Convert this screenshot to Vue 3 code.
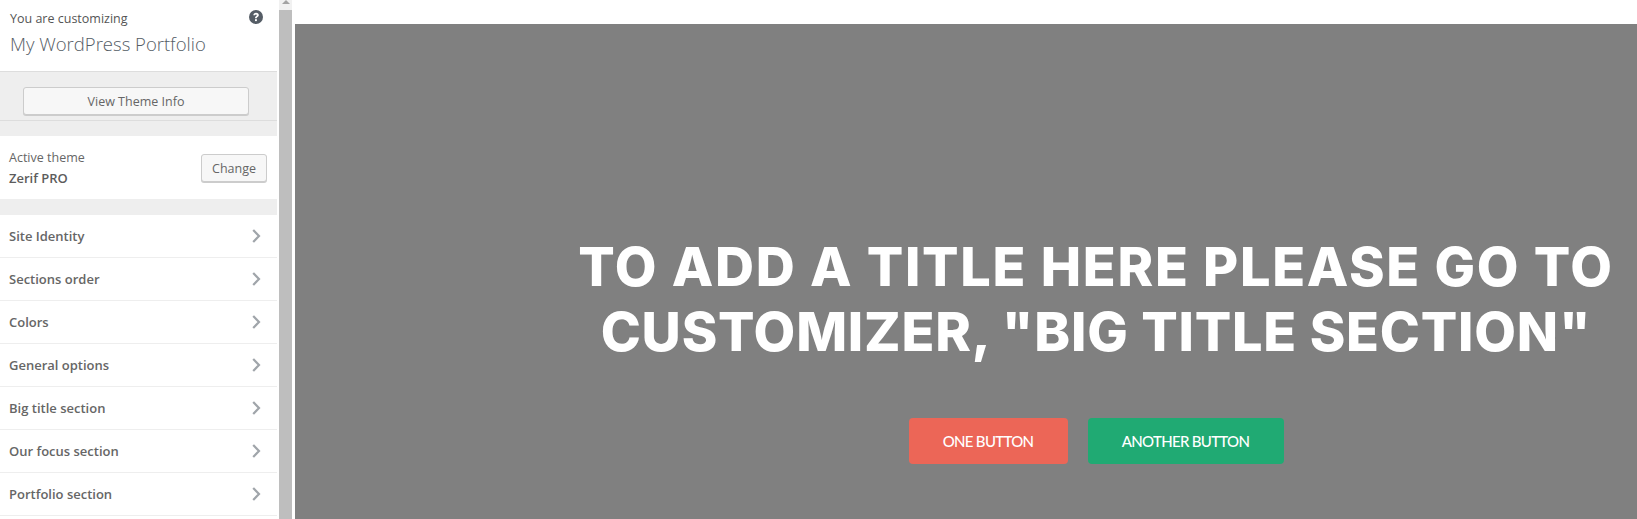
<template>
  <div class="page">
    <aside class="sidebar">
      <div class="panel">
        <header class="info">
          <div class="info-top">
            <span class="customizing">You are customizing</span>
            <svg class="help" viewBox="0 0 14 14" aria-hidden="true">
              <circle cx="7" cy="7" r="7" fill="#555d66" />
              <path d="M4.300 5.300C4.400 3.700 5.500 2.800 7.100 2.800c1.600 0 2.700.9 2.700 2.300 0 1.100-.6 1.600-1.300 2-.5.3-.7.600-.7 1.200H6c0-1.100.3-1.600 1-2.100.5-.3.800-.5.800-1 0-.5-.3-.8-.8-.8-.6 0-.9.400-1 .9H4.300z" fill="#fff" />
              <rect x="6" y="9.200" width="1.900" height="1.900" fill="#fff" />
            </svg>
          </div>
          <div class="site-title">My WordPress Portfolio</div>
        </header>
        <div class="theme-info">
          <button class="wp-btn wide">View Theme Info</button>
        </div>
        <section class="active-theme">
          <div>
            <div class="active-label">Active theme</div>
            <div class="active-name">Zerif PRO</div>
          </div>
          <button class="wp-btn change">Change</button>
        </section>
        <ul class="sections">
          <li v-for="s in sections" :key="s" class="row">
            <span>{{ s }}</span>
            <svg class="chev" viewBox="0 0 9 14" aria-hidden="true">
              <path d="M1.200 1 7 7l-5.800 6" fill="none" stroke="#a0a5aa" stroke-width="2.200" />
            </svg>
          </li>
        </ul>
      </div>
      <div class="scrollbar">
        <div class="arrow"></div>
        <div class="thumb"></div>
      </div>
    </aside>
    <main class="preview">
      <div class="topbar"></div>
      <div class="hero">
        <h1><span class="line-a">TO ADD A TITLE HERE PLEASE GO TO</span><span class="line-b">CUSTOMIZER, "BIG TITLE SECTION"</span></h1>
        <div class="cta">
          <a class="cta-btn red">ONE BUTTON</a>
          <a class="cta-btn green">ANOTHER BUTTON</a>
        </div>
      </div>
    </main>
  </div>
</template>

<script setup>
const sections = [
  'Site Identity',
  'Sections order',
  'Colors',
  'General options',
  'Big title section',
  'Our focus section',
  'Portfolio section',
]
</script>

<style>
html, body { margin: 0; overflow: hidden; background: #fff; }
</style>

<style scoped>
.page {
  display: flex;
  width: 1637px;
  height: 519px;
  overflow: hidden;
  background: #fff;
  font-family: "Open Sans", "Noto Sans", sans-serif;
  color: #555;
}
.sidebar { display: flex; width: 292px; flex: none; height: 519px; overflow: hidden; }
.panel { width: 277px; flex: none; background: #eee; }
.info { height: 72px; box-sizing: border-box; background: #fff; border-bottom: 1px solid #ddd; padding: 10px 14px 0 10px; }
.info-top { display: flex; justify-content: space-between; align-items: flex-start; height: 20px; }
.customizing { font-size: 12.500px; line-height: 18px; }
.help { width: 14px; height: 14px; }
.site-title { font-size: 18.500px; font-weight: 300; line-height: 26px; color: #555d66; margin-top: 1px; }
.theme-info { height: 49px; box-sizing: border-box; padding: 15px 0 0 23px; border-bottom: 1px solid #ddd; display: flex; margin-bottom: 15px; }
.wp-btn {
  height: 28px;
  box-sizing: border-box;
  padding: 1px 0 0;
  background: #f7f7f7;
  border: 1px solid #ccc;
  border-radius: 3px;
  box-shadow: 0 1px 0 #ccc;
  color: #666;
  font: 12.500px/26px "Open Sans", "Noto Sans", sans-serif;
}
.wide { width: 226px; }
.change { width: 66px; }
.active-theme { height: 63px; box-sizing: border-box; background: #fff; padding: 1px 10px 0 9px; display: flex; justify-content: space-between; align-items: center; margin-bottom: 16px; }
.active-label { font-size: 12.500px; line-height: 20px; color: #666; }
.active-name { font-size: 13px; font-weight: 600; line-height: 20px; color: #5c5c5c; }
.sections { list-style: none; margin: 0; padding: 0; background: #fff; min-height: 320px; }
.row {
  height: 43px;
  box-sizing: border-box;
  background: #fff;
  border-bottom: 1px solid #eee;
  padding: 0 16px 0 9px;
  display: flex;
  align-items: center;
  justify-content: space-between;
  font-size: 13px;
  font-weight: 600;
  color: #666;
}
.chev { width: 9px; height: 14px; }
.scrollbar { margin-left: 2px; background: #f1f1f1; flex: none; display: flex; flex-direction: column; width: 13px; }
.arrow { height: 10px; flex: none; position: relative; }
.arrow::before { content: ""; position: absolute; left: 3px; top: 0; border: 4px solid transparent; border-top: 0; border-bottom: 4px solid #a3a3a3; }
.thumb { flex: 1; background: #bebebe; }
.preview { flex: 1; min-width: 0; margin-left: 3px; display: flex; flex-direction: column; }
.topbar { height: 24px; flex: none; background: #fff; }
.hero { flex: 1; background: #808080; padding-left: 260px; text-align: center; color: #fff; }
h1 {
  margin: 210px 0 0;
  font-family: Inter, "Open Sans", sans-serif;
  font-size: 54px;
  font-weight: 800;
  line-height: 65px;
  white-space: nowrap;
}
.line-a, .line-b { display: block; }
.line-a { letter-spacing: 1.700px; }
.line-b { letter-spacing: 0.780px; }
.cta { display: flex; justify-content: center; gap: 20px; margin-top: 54px; }
.cta-btn {
  height: 46px;
  box-sizing: border-box;
  border-radius: 4px;
  font-family: Lato, sans-serif;
  font-size: 15px;
  font-weight: 500;
  letter-spacing: -0.700px;
  line-height: 46px;
  text-align: center;
  color: #fff;
}
.red { width: 159px; background: #ec6657; }
.green { width: 196px; background: #20aa73; }
</style>
